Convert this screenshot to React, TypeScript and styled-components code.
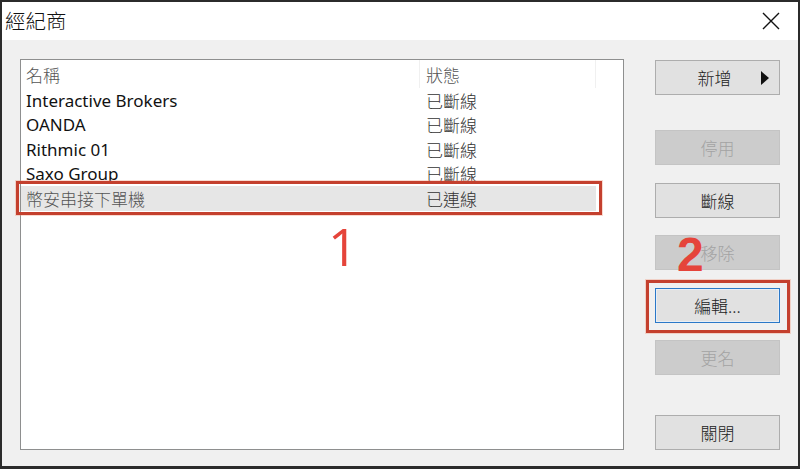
import React from "react";
import styled, { createGlobalStyle } from "styled-components";

const Global = createGlobalStyle`
  html, body { margin: 0; padding: 0; background: #2b2b2b; }
  * { box-sizing: border-box; }
`;

const CJK = `"Noto Sans", "Noto Sans CJK TC", sans-serif`;

const Window = styled.div`
  position: relative;
  width: 800px;
  height: 469px;
  border: 2px solid #2b2b2b;
  border-bottom-width: 3px;
  background: #f0f0f0;
  display: flex;
  flex-direction: column;
  font-family: ${CJK};
  overflow: hidden;
`;

const TitleBar = styled.div`
  height: 38px;
  background: #ffffff;
  display: flex;
  align-items: center;
  justify-content: space-between;
  padding: 0 18px 0 3px;
`;

const Title = styled.div`
  font-size: 20.5px;
  color: #111;
  font-family: "Noto Sans CJK TC", sans-serif;
  font-weight: 300;
  line-height: 1;
  margin-top: -2px;
`;

const Body = styled.div`
  flex: 1;
  display: flex;
  padding: 19px 0 0 18px;
`;

const ListBox = styled.div`
  width: 604px;
  height: 391px;
  background: #ffffff;
  border: 1px solid #8e8f8f;
  display: flex;
  flex-direction: column;
`;

const HeaderRow = styled.div`
  height: 28px;
  display: flex;
  align-items: center;
  color: #555;
  font-size: 17px;
`;

const Row = styled.div<{ $selected?: boolean }>`
  height: 24.5px;
  display: flex;
  align-items: center;
  font-size: 17px;
  color: ${(p) => (p.$selected ? "#555" : "#111")};
  background: ${(p) => (p.$selected ? "#e6e6e6" : "transparent")};
  width: 575px;
`;

const NameCell = styled.div<{ $header?: boolean; $cjk?: boolean }>`
  width: 399px;
  height: 100%;
  display: flex;
  align-items: center;
  padding-left: 5px;
  white-space: nowrap;
  font-family: ${(p) => (p.$cjk ? `"Noto Sans CJK TC", sans-serif` : CJK)};
  font-weight: ${(p) => (p.$cjk ? 300 : 400)};
  border-right: ${(p) => (p.$header ? "1px solid #f0f0f0" : "none")};
`;

const StatusCell = styled.div<{ $header?: boolean }>`
  width: 176px;
  height: 100%;
  display: flex;
  align-items: center;
  padding-left: 6px;
  white-space: nowrap;
  font-family: "Noto Sans CJK TC", sans-serif;
  font-weight: 300;
  color: ${(p) => (p.$header ? "#555" : "#333")};
  border-right: ${(p) => (p.$header ? "1px solid #f0f0f0" : "none")};
`;

const ButtonColumn = styled.div`
  margin-left: 31px;
  width: 125px;
  display: flex;
  flex-direction: column;
  padding-top: 1px;
`;

const Button = styled.div<{ $top: number; $disabled?: boolean; $focused?: boolean }>`
  position: relative;
  margin-top: ${(p) => p.$top}px;
  height: 35px;
  width: 125px;
  display: flex;
  align-items: center;
  justify-content: center;
  font-size: 17px;
  font-family: "Noto Sans CJK TC", sans-serif;
  font-weight: 300;
  background: ${(p) => (p.$disabled ? "#cccccc" : "#e1e1e1")};
  color: ${(p) => (p.$disabled ? "#a3a3a3" : "#222")};
  border: 1px solid ${(p) => (p.$disabled ? "#c4c4c4" : p.$focused ? "#2a78c8" : "#adadad")};
  box-shadow: ${(p) => (p.$focused ? "inset 0 0 0 1px #e8eef5" : "none")};
`;

const Arrow = styled.span`
  position: absolute;
  right: 10px;
  top: 10px;
  width: 0;
  height: 0;
  border-top: 7px solid transparent;
  border-bottom: 7px solid transparent;
  border-left: 8px solid #111;
`;

const NewLabel = styled.span`
  margin-left: -6px;
`;

const RedBox = styled.div<{ $x: number; $y: number; $w: number; $h: number }>`
  position: absolute;
  left: ${(p) => p.$x}px;
  top: ${(p) => p.$y}px;
  width: ${(p) => p.$w}px;
  height: ${(p) => p.$h}px;
  border: 3px solid #c4402e;
  box-shadow: 0 0 0 1px rgba(240, 150, 120, 0.35);
  pointer-events: none;
`;

const Marker = styled.div<{ $x: number; $y: number; $bold?: boolean }>`
  position: absolute;
  left: ${(p) => p.$x}px;
  top: ${(p) => p.$y}px;
  font-family: ${(p) => (p.$bold ? `"Liberation Sans", Arial, sans-serif` : `"Open Sans", sans-serif`)};
  font-size: ${(p) => (p.$bold ? 48 : 52)}px;
  font-weight: ${(p) => (p.$bold ? 700 : 400)};
  color: #e5443a;
  line-height: 1;
  pointer-events: none;
`;

const CloseIcon = () => (
  <svg width="18" height="18" viewBox="0 0 18 18">
    <path d="M1 1 L17 17 M17 1 L1 17" stroke="#111" strokeWidth="1.4" fill="none" />
  </svg>
);

const brokers = [
  { name: "Interactive Brokers", status: "已斷線" },
  { name: "OANDA", status: "已斷線" },
  { name: "Rithmic 01", status: "已斷線" },
  { name: "Saxo Group", status: "已斷線" },
  { name: "幣安串接下單機", status: "已連線", selected: true, cjk: true },
];

export default function App() {
  return (
    <>
      <Global />
      <Window>
        <TitleBar>
          <Title>經紀商</Title>
          <CloseIcon />
        </TitleBar>
        <Body>
          <ListBox>
            <HeaderRow>
              <NameCell $header $cjk>名稱</NameCell>
              <StatusCell $header>狀態</StatusCell>
            </HeaderRow>
            {brokers.map((b) => (
              <Row key={b.name} $selected={b.selected}>
                <NameCell $cjk={b.cjk}>{b.name}</NameCell>
                <StatusCell>{b.status}</StatusCell>
              </Row>
            ))}
          </ListBox>
          <ButtonColumn>
            <Button $top={0}>
              <NewLabel>新增</NewLabel>
              <Arrow />
            </Button>
            <Button $top={35} $disabled>停用</Button>
            <Button $top={18}>斷線</Button>
            <Button $top={17} $disabled>移除</Button>
            <Button $top={18} $focused>編輯...</Button>
            <Button $top={17} $disabled>更名</Button>
            <Button $top={40}>關閉</Button>
          </ButtonColumn>
        </Body>
        <RedBox $x={14} $y={179} $w={586} $h={34} />
        <RedBox $x={644} $y={278} $w={144} $h={53} />
        <Marker $x={326} $y={218}>1</Marker>
        <Marker $x={675} $y={229} $bold>2</Marker>
      </Window>
    </>
  );
}
